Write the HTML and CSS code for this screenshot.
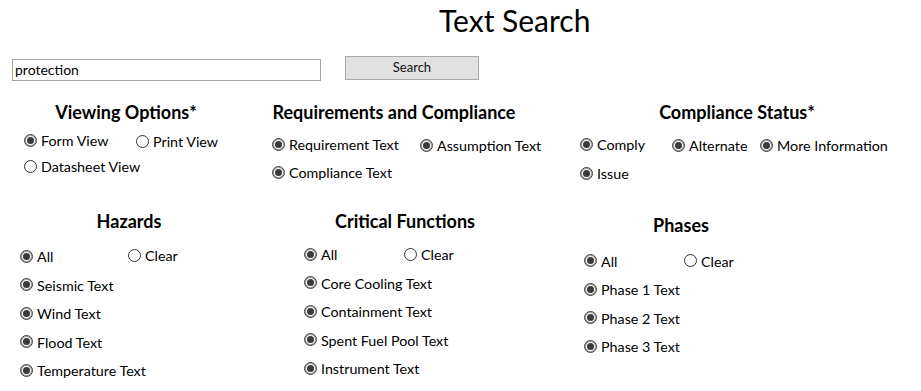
FILE: index.html
```html
<!DOCTYPE html>
<html>
<head>
<meta charset="utf-8">
<title>Text Search</title>
<link rel="stylesheet" href="styles.css">
</head>
<body>
<div class="page">
  <h1 class="title">Text Search</h1>

  <div class="search-row">
    <div class="search-input">protection</div>
    <div class="search-btn">Search</div>
  </div>

  <div class="groups groups-top">
    <section class="group">
      <h2 class="heading h-viewing">Viewing Options*</h2>
      <div class="options opt-viewing">
        <label class="opt"><span class="radio on"></span>Form View</label>
        <label class="opt down2"><span class="radio"></span>Print View</label>
        <label class="opt"><span class="radio"></span>Datasheet View</label>
      </div>
    </section>
    <section class="group">
      <h2 class="heading h-req">Requirements and Compliance</h2>
      <div class="options opt-req">
        <label class="opt"><span class="radio on"></span>Requirement Text</label>
        <label class="opt down2"><span class="radio on"></span>Assumption Text</label>
        <label class="opt"><span class="radio on"></span>Compliance Text</label>
      </div>
    </section>
    <section class="group">
      <h2 class="heading h-status">Compliance Status*</h2>
      <div class="options opt-status">
        <label class="opt"><span class="radio on"></span>Comply</label>
        <label class="opt down2"><span class="radio on"></span>Alternate</label>
        <label class="opt down2"><span class="radio on"></span>More Information</label>
        <label class="opt"><span class="radio on"></span>Issue</label>
      </div>
    </section>
  </div>

  <div class="groups groups-bottom">
    <section class="group">
      <h2 class="heading h-hazards">Hazards</h2>
      <div class="options opt-list opt-hazards">
        <label class="opt"><span class="radio on"></span>All</label>
        <label class="opt up2"><span class="radio"></span>Clear</label>
        <label class="opt"><span class="radio on"></span>Seismic Text</label>
        <label class="opt"><span class="radio on"></span>Wind Text</label>
        <label class="opt"><span class="radio on"></span>Flood Text</label>
        <label class="opt"><span class="radio on"></span>Temperature Text</label>
      </div>
    </section>
    <section class="group">
      <h2 class="heading h-critical">Critical Functions</h2>
      <div class="options opt-list opt-critical">
        <label class="opt"><span class="radio on"></span>All</label>
        <label class="opt"><span class="radio"></span>Clear</label>
        <label class="opt"><span class="radio on"></span>Core Cooling Text</label>
        <label class="opt"><span class="radio on"></span>Containment Text</label>
        <label class="opt"><span class="radio on"></span>Spent Fuel Pool Text</label>
        <label class="opt"><span class="radio on"></span>Instrument Text</label>
      </div>
    </section>
    <section class="group">
      <h2 class="heading h-phases">Phases</h2>
      <div class="options opt-list opt-phases">
        <label class="opt"><span class="radio on"></span>All</label>
        <label class="opt"><span class="radio"></span>Clear</label>
        <label class="opt"><span class="radio on"></span>Phase 1 Text</label>
        <label class="opt"><span class="radio on"></span>Phase 2 Text</label>
        <label class="opt"><span class="radio on"></span>Phase 3 Text</label>
      </div>
    </section>
  </div>
</div>
</body>
</html>
```

FILE: styles.css
```css
html, body {
  margin: 0;
  padding: 0;
  background: #ffffff;
}

body {
  font-family: Lato, "Open Sans", "Liberation Sans", sans-serif;
  color: #000;
  width: 921px;
  height: 391px;
  overflow: hidden;
}

.title {
  margin: 0;
  padding-left: 439px;
  height: 40px;
  font-size: 30px;
  line-height: 40px;
  font-weight: 400;
}

.search-row {
  display: flex;
  align-items: flex-start;
  margin-top: 16px;
  padding-left: 12px;
  height: 24px;
}

.search-input {
  box-sizing: border-box;
  width: 309px;
  height: 22px;
  margin-top: 3px;
  border: 1px solid #a5a5a5;
  padding-left: 2px;
  font-size: 14px;
  line-height: 20px;
}

.search-btn {
  box-sizing: border-box;
  width: 134px;
  height: 24px;
  margin-left: 24px;
  border: 1px solid #adadad;
  background: #e1e1e1;
  font-size: 13px;
  line-height: 20px;
  text-align: center;
  color: #111;
}

.groups {
  display: grid;
}

.groups-top {
  margin-top: 22px;
  padding-left: 20px;
  grid-template-columns: 248px 308px auto;
  height: 82px;
}

.groups-bottom {
  margin-top: 27px;
  padding-left: 16px;
  grid-template-columns: 284px 280px auto;
}

.heading {
  margin: 0;
  font-size: 18px;
  line-height: 20px;
  height: 20px;
  font-weight: 700;
  text-align: center;
  white-space: nowrap;
}

.h-viewing { width: 212px; }
.h-req { width: 252px; }
.h-status { width: 322px; }
.h-hazards { width: 226px; }
.h-critical { width: 210px; }
.h-phases { width: 202px; margin-top: 4px; }

.options {
  display: grid;
  padding-left: 4px;
  grid-auto-rows: 20px;
}

.opt-viewing {
  padding-top: 9px;
  grid-template-columns: 112px auto;
  row-gap: 6px;
}

.opt-req {
  padding-top: 13px;
  grid-template-columns: 148px auto;
  row-gap: 8px;
}

.opt-status {
  padding-top: 13px;
  grid-template-columns: 92px 88px auto;
  row-gap: 9px;
}

.opt-list {
  row-gap: 8.5px;
}

.opt-hazards {
  padding-top: 16px;
  grid-template-columns: 108px auto;
}

.opt-critical {
  padding-top: 14px;
  grid-template-columns: 100px auto;
}

.opt-phases {
  padding-top: 16.5px;
  grid-template-columns: 100px auto;
}

.opt-list .opt:nth-child(n+3) {
  grid-column: 1 / -1;
}

.opt {
  display: flex;
  align-items: center;
  font-size: 14.3px;
  line-height: 20px;
  white-space: nowrap;
}

.down2 { margin-top: 2px; }
.up2 { margin-top: -2px; }

.radio {
  box-sizing: border-box;
  flex: none;
  width: 13px;
  height: 13px;
  margin-right: 4px;
  margin-top: -2px;
  border: 1px solid #333;
  border-radius: 50%;
  background: #fff;
  display: flex;
  align-items: center;
  justify-content: center;
}

.radio.on {
  border-color: #3c3c3c;
  box-shadow: inset 0 0 0 1px #9a9a9a;
}

.radio.on::after {
  content: "";
  width: 7px;
  height: 7px;
  border-radius: 50%;
  background: #3a3a3a;
}
```
